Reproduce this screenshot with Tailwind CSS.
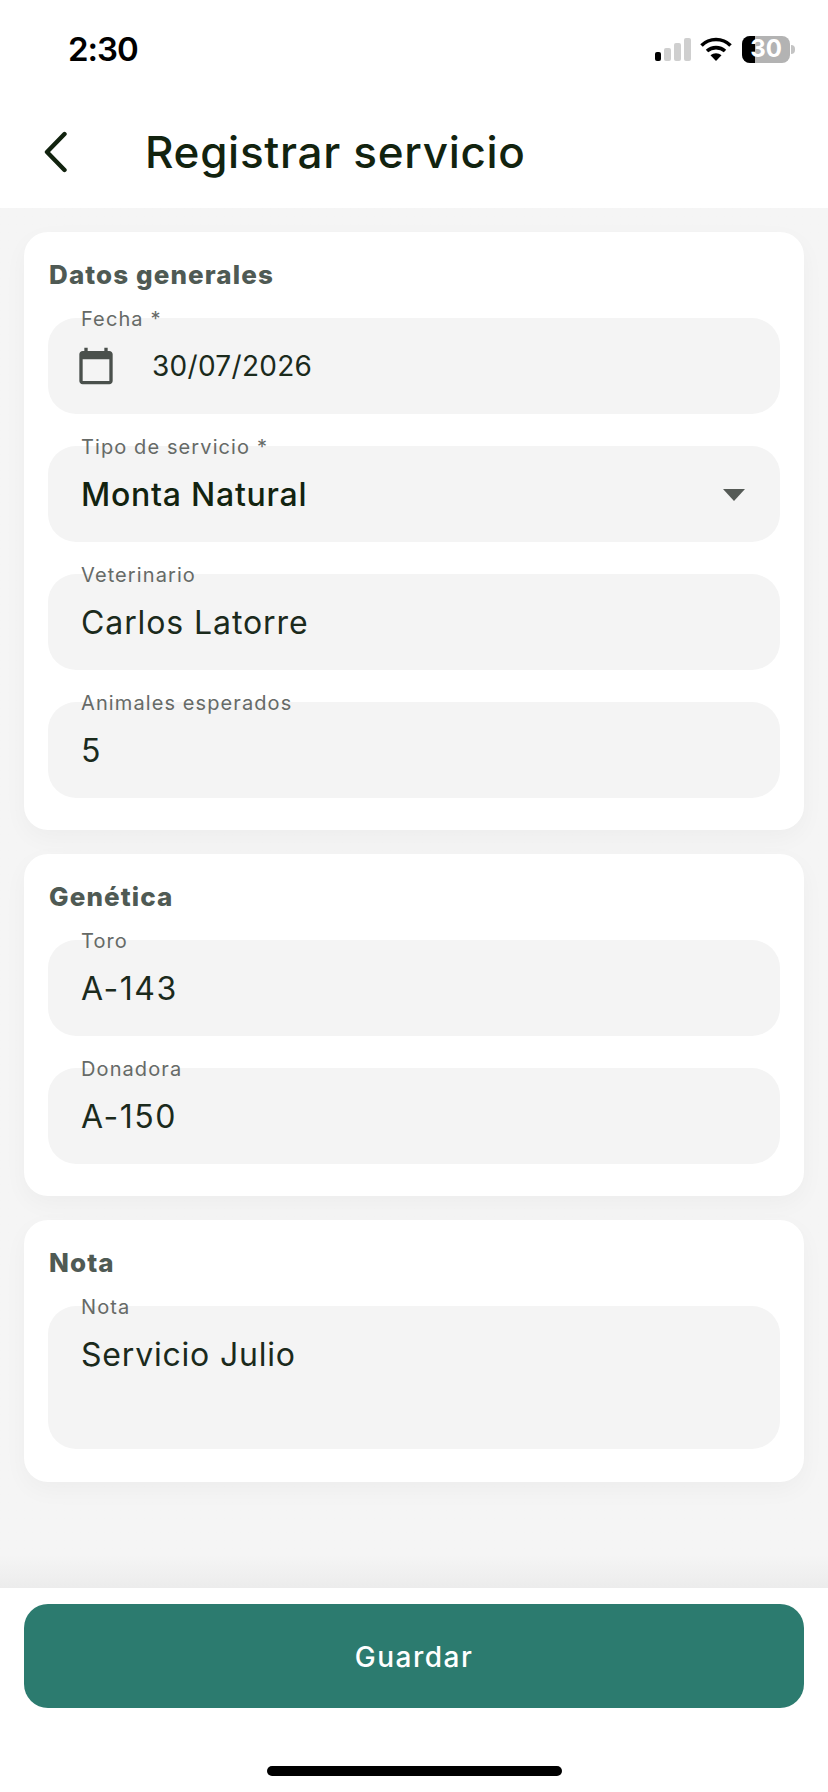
<!DOCTYPE html>
<html lang="es">
  <head>
    <meta charset="UTF-8" />
    <meta name="viewport" content="width=device-width, initial-scale=1.0" />
    <title>Registrar servicio</title>
    <script src="https://cdn.jsdelivr.net/npm/@tailwindcss/browser@4"></script>
  </head>
  <body class="bg-white font-['Inter',sans-serif]">
    <div class="flex flex-col w-[828px] h-[1792px] overflow-hidden">
      <!-- Status bar -->
      <div class="flex items-center justify-between h-[98px] pl-[68px] pr-[33px] bg-white">
        <span class="text-[33px] font-semibold tracking-[-1px] text-black leading-none">2:30</span>
        <div class="flex items-center">
          <div class="flex items-end gap-[3px] h-[23px]">
            <div class="w-[6px] h-[9px] rounded-[2px] bg-black"></div>
            <div class="w-[7px] h-[13px] rounded-[2px] bg-[#cfcfcf]"></div>
            <div class="w-[7px] h-[18px] rounded-[2px] bg-[#cfcfcf]"></div>
            <div class="w-[7px] h-[23px] rounded-[2px] bg-[#cfcfcf]"></div>
          </div>
          <svg class="ml-[9px]" width="32" height="24" viewBox="0 0 32 24" fill="none" stroke="black" stroke-width="3.6">
            <path d="M1.5 8.5C9.5 0.5 22.5 0.5 30.5 8.5" />
            <path d="M7 14C12 9.5 20 9.5 25 14" />
            <path d="M16 24L10.5 18.3C13.5 15.6 18.5 15.6 21.5 18.3Z" fill="black" stroke="none" />
          </svg>
          <div class="relative ml-[10px] w-[48px] h-[27px] rounded-[8px] overflow-hidden flex bg-[#b3b3b3]">
            <div class="w-[13px] bg-black"></div>
            <span class="absolute inset-0 flex items-center justify-center text-[24px] font-bold leading-none text-white">30</span>
          </div>
          <div class="w-[4px] h-[9px] ml-[1px] rounded-r-full bg-[#c4c4c4]"></div>
        </div>
      </div>

      <!-- Header -->
      <div class="flex items-center h-[110px] pl-[40px] pb-[2px] bg-white">
        <svg width="32" height="42" viewBox="0 0 32 42" fill="none" stroke="#12230f" stroke-width="4.4" stroke-linecap="round" stroke-linejoin="round" class="mr-[73px]">
          <path d="M24.5 3L7 21L24.5 39" />
        </svg>
        <h1 class="text-[44px] font-medium tracking-[0.7px] text-[#12230f] leading-none">Registrar servicio</h1>
      </div>

      <!-- Form -->
      <div class="flex-1 min-h-0 flex flex-col gap-[24px] px-[24px] pt-[24px] bg-gradient-to-b from-[#f5f5f5] from-[97.6%] to-[#ececec]">
        <section class="bg-white rounded-[24px] shadow-[0_8px_24px_rgba(0,0,0,0.035)] px-[24px] pt-[28px] pb-[32px]">
          <h2 class="h-[30px] mb-[28px] ml-[1px] text-[26px] font-extrabold tracking-[1.1px] leading-[30px] text-[#4f5a54]">Datos generales</h2>
          <div class="flex flex-col gap-[32px]">
            <div class="relative flex items-center h-[96px] px-[28px] rounded-[28px] bg-[#f4f4f4]">
              <span class="absolute left-[33px] -top-[11px] text-[20px] leading-[24px] tracking-[1.1px] text-[#666a67]">Fecha *</span>
              <svg width="40" height="40" viewBox="0 0 24 24" fill="#4a504c" class="mr-[36px]">
                <path d="M20 3h-1V1h-2v2H7V1H5v2H4c-1.1 0-2 .9-2 2v16c0 1.1.9 2 2 2h16c1.1 0 2-.9 2-2V5c0-1.1-.9-2-2-2zm0 18H4V8h16v13z" />
              </svg>
              <span class="text-[28px] tracking-[0.3px] text-[#1b2a1c]">30/07/2026</span>
            </div>
            <div class="relative flex items-center justify-between h-[96px] px-[33px] pt-[2px] rounded-[28px] bg-[#f4f4f4]">
              <span class="absolute left-[33px] -top-[11px] text-[20px] leading-[24px] tracking-[1.1px] text-[#666a67]">Tipo de servicio *</span>
              <span class="text-[32px] font-medium tracking-[0.75px] text-[#12230f]">Monta Natural</span>
              <div class="w-0 h-0 border-x-[11px] border-x-transparent border-t-[12px] border-t-[#555a56] mr-[2px]"></div>
            </div>
            <div class="relative flex items-center h-[96px] px-[33px] pt-[2px] rounded-[28px] bg-[#f4f4f4]">
              <span class="absolute left-[33px] -top-[11px] text-[20px] leading-[24px] tracking-[1.1px] text-[#666a67]">Veterinario</span>
              <span class="text-[32px] tracking-[0.9px] text-[#1b2a1c]">Carlos Latorre</span>
            </div>
            <div class="relative flex items-center h-[96px] px-[33px] pt-[2px] rounded-[28px] bg-[#f4f4f4]">
              <span class="absolute left-[33px] -top-[11px] text-[20px] leading-[24px] tracking-[1.1px] text-[#666a67]">Animales esperados</span>
              <span class="text-[32px] tracking-[1px] text-[#1b2a1c]">5</span>
            </div>
          </div>
        </section>

        <section class="bg-white rounded-[24px] shadow-[0_8px_24px_rgba(0,0,0,0.035)] px-[24px] pt-[28px] pb-[32px]">
          <h2 class="h-[30px] mb-[28px] ml-[1px] text-[26px] font-extrabold tracking-[1.1px] leading-[30px] text-[#4f5a54]">Genética</h2>
          <div class="flex flex-col gap-[32px]">
            <div class="relative flex items-center h-[96px] px-[33px] pt-[2px] rounded-[28px] bg-[#f4f4f4]">
              <span class="absolute left-[33px] -top-[11px] text-[20px] leading-[24px] tracking-[1.1px] text-[#666a67]">Toro</span>
              <span class="text-[32px] tracking-[1.5px] text-[#1b2a1c]">A-143</span>
            </div>
            <div class="relative flex items-center h-[96px] px-[33px] pt-[2px] rounded-[28px] bg-[#f4f4f4]">
              <span class="absolute left-[33px] -top-[11px] text-[20px] leading-[24px] tracking-[1.1px] text-[#666a67]">Donadora</span>
              <span class="text-[32px] tracking-[1.5px] text-[#1b2a1c]">A-150</span>
            </div>
          </div>
        </section>

        <section class="bg-white rounded-[24px] shadow-[0_8px_24px_rgba(0,0,0,0.035)] px-[24px] pt-[28px] pb-[33px]">
          <h2 class="h-[30px] mb-[28px] ml-[1px] text-[26px] font-extrabold tracking-[1.1px] leading-[30px] text-[#4f5a54]">Nota</h2>
          <div class="relative h-[143px] px-[33px] pt-[25px] rounded-[28px] bg-[#f4f4f4]">
            <span class="absolute left-[33px] -top-[11px] text-[20px] leading-[24px] tracking-[1.1px] text-[#666a67]">Nota</span>
            <span class="text-[32px] tracking-[0.8px] text-[#1b2a1c]">Servicio Julio</span>
          </div>
        </section>
      </div>

      <!-- Footer -->
      <div class="h-[204px] px-[24px] pt-[16px] bg-white">
        <button class="w-full h-[104px] pt-[2px] rounded-[24px] bg-[#2c7b6f] text-[28px] font-medium tracking-[1.5px] text-white">Guardar</button>
        <div class="w-[295px] h-[10px] mx-auto mt-[58px] rounded-full bg-black"></div>
      </div>
    </div>
  </body>
</html>
